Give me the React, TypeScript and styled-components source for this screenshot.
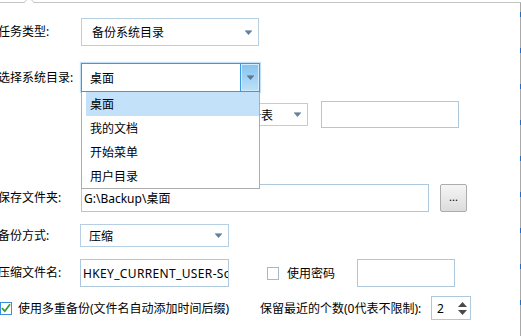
import React from "react";
import styled, { createGlobalStyle } from "styled-components";

const GlobalStyle = createGlobalStyle`
  html, body { margin: 0; padding: 0; background: #fff; overflow: hidden; }
  body {
    font-family: "Noto Sans", "Noto Sans CJK SC", sans-serif;
    font-size: 12px;
    color: #000;
  }
  * { box-sizing: border-box; }
`;

const Screen = styled.div`
  width: 521px;
  height: 336px;
  position: relative;
  overflow: hidden;
  background: #fff;
`;

const Panel = styled.div`
  margin-top: 2px;
  height: 334px;
  border-top: 1px solid #c6c6c6;
  border-right: 1px solid #a9a9a9;
  position: relative;
  display: flex;
  flex-direction: column;
  &::after {
    content: "";
    position: absolute;
    right: -1px;
    top: 0;
    bottom: 0;
    width: 1px;
    background: repeating-linear-gradient(
      to bottom,
      transparent 0px,
      transparent 9px,
      #1c6fc4 9px,
      #1c6fc4 14px,
      transparent 14px,
      transparent 36px
    );
  }
`;

const Notch = styled.svg`
  position: absolute;
  left: 23px;
  top: -3px;
`;

const Row = styled.div<{ $h: number; $mt: number }>`
  display: flex;
  align-items: center;
  height: ${(p) => p.$h}px;
  margin-top: ${(p) => p.$mt}px;
  position: relative;
  flex-shrink: 0;
`;

const Label = styled.div<{ $w?: number }>`
  width: ${(p) => p.$w ?? 83}px;
  margin-left: -2px;
  flex-shrink: 0;
  white-space: nowrap;
  line-height: 16px;
`;

const SelectBox = styled.div<{ $w: number; $h: number; $focused?: boolean; $ml?: number }>`
  width: ${(p) => p.$w}px;
  height: ${(p) => p.$h}px;
  margin-left: ${(p) => p.$ml ?? 0}px;
  border: 1px solid ${(p) => (p.$focused ? "#3c9ae4" : "#b7cfe3")};
  box-shadow: ${(p) => (p.$focused ? "0 0 1px 1px rgba(90,170,235,0.35)" : "none")};
  background: #fff;
  display: flex;
  align-items: stretch;
  position: relative;
  flex-shrink: 0;
`;

const SelectText = styled.div<{ $pad: number }>`
  flex: 1;
  padding-left: ${(p) => p.$pad}px;
  display: flex;
  align-items: center;
  white-space: nowrap;
  overflow: hidden;
`;

const ArrowCell = styled.div<{ $focused?: boolean }>`
  width: 19px;
  display: flex;
  align-items: center;
  justify-content: center;
  background: ${(p) => (p.$focused ? "linear-gradient(#86c3ef, #bde1f9)" : "transparent")};
  border-left: ${(p) => (p.$focused ? "1px solid #3c9ae4" : "none")};
  box-shadow: ${(p) => (p.$focused ? "inset 0 0 0 1px #d3ebfb" : "none")};
`;

const DropList = styled.div`
  position: absolute;
  top: calc(100% + 1px);
  left: -1px;
  width: calc(100% + 2px);
  border: 1px solid #adadad;
  border-top: none;
  background: #fff;
  padding-left: 4px;
  z-index: 5;
`;

const DropItem = styled.div<{ $selected?: boolean }>`
  height: 24px;
  display: flex;
  align-items: center;
  padding-left: 4px;
  background: ${(p) => (p.$selected ? "#c4e1fa" : "transparent")};
  white-space: nowrap;
`;

const TextBox = styled.div<{ $w: number; $h: number; $ml?: number; $ls?: number }>`
  width: ${(p) => p.$w}px;
  height: ${(p) => p.$h}px;
  margin-left: ${(p) => p.$ml ?? 0}px;
  border: 1px solid #aec8de;
  background: #fff;
  padding-left: 2px;
  display: flex;
  align-items: center;
  white-space: nowrap;
  overflow: hidden;
  flex-shrink: 0;
  letter-spacing: ${(p) => p.$ls ?? 0}px;
`;

const BrowseButton = styled.div`
  width: 27px;
  height: 28px;
  margin-left: 11px;
  border: 1px solid #acacac;
  border-radius: 2px;
  background: linear-gradient(#f5f5f5, #dcdcdc);
  display: flex;
  align-items: center;
  justify-content: center;
  font-size: 11px;
  line-height: 1;
  padding-bottom: 3px;
  flex-shrink: 0;
`;

const Check = styled.div<{ $checked?: boolean; $ml?: number }>`
  width: 12px;
  height: 13px;
  margin-left: ${(p) => p.$ml ?? 0}px;
  border: 1px solid ${(p) => (p.$checked ? "#3b8fdc" : "#a6b9cb")};
  background: #fff;
  display: flex;
  align-items: center;
  justify-content: center;
  flex-shrink: 0;
`;

const CheckLabel = styled.span<{ $ml: number }>`
  margin-left: ${(p) => p.$ml}px;
  white-space: nowrap;
`;

const Cell = styled.div<{ $w: number }>`
  width: ${(p) => p.$w}px;
  display: flex;
  align-items: center;
  flex-shrink: 0;
`;

const Spinner = styled.div`
  width: 40px;
  height: 24px;
  margin-left: 6px;
  border: 1px solid #aec8de;
  background: #fff;
  display: flex;
  align-items: center;
  flex-shrink: 0;
`;

const SpinValue = styled.div`
  flex: 1;
  padding-left: 5px;
`;

const SpinArrows = styled.div`
  width: 14px;
  display: flex;
  flex-direction: column;
  align-items: center;
  gap: 3px;
  padding-right: 2px;
`;

const Arrow = ({ color = "#62819d" }: { color?: string }) => (
  <svg width="7" height="5" viewBox="0 0 7 5">
    <rect x="0" y="0" width="7" height="1" fill={color} opacity="0.6" />
    <polygon points="0,1 7,1 3.5,5" fill={color} />
  </svg>
);

const Tri = ({ up }: { up?: boolean }) => (
  <svg width="9" height="5" viewBox="0 0 9 5">
    <polygon points={up ? "0,5 9,5 4.5,0" : "0,0 9,0 4.5,5"} fill="#4a4a4a" />
  </svg>
);

const CheckMark = () => (
  <svg width="10" height="10" viewBox="0 0 10 10">
    <path d="M1 5.2 L3.8 8.2 L9 1.2" stroke="#3a9b2f" strokeWidth="1.8" fill="none" />
  </svg>
);

export default function App() {
  return (
    <>
      <GlobalStyle />
      <Screen>
        <Panel>
          <Notch width="12" height="4" viewBox="0 0 12 4">
            <rect x="1.5" y="2" width="9" height="2" fill="#fff" />
            <path d="M0.5 3 L3.5 0" stroke="#c6c6c6" strokeWidth="1" />
            <path d="M8.5 0 L11.5 3" stroke="#c6c6c6" strokeWidth="1" />
          </Notch>

          <Row $h={28} $mt={15}>
            <Label>任务类型:</Label>
            <SelectBox $w={178} $h={28}>
              <SelectText $pad={10}>备份系统目录</SelectText>
              <ArrowCell>
                <Arrow />
              </ArrowCell>
            </SelectBox>
          </Row>

          <Row $h={29} $mt={17} style={{ zIndex: 5 }}>
            <Label>选择系统目录:</Label>
            <SelectBox $w={179} $h={29} $focused>
              <SelectText $pad={8}>桌面</SelectText>
              <ArrowCell $focused>
                <Arrow color="#5c7893" />
              </ArrowCell>
              <DropList>
                <DropItem $selected>桌面</DropItem>
                <DropItem>我的文档</DropItem>
                <DropItem>开始菜单</DropItem>
                <DropItem>用户目录</DropItem>
              </DropList>
            </SelectBox>
          </Row>

          <Row $h={27} $mt={9}>
            <SelectBox $w={80} $h={23} $ml={228}>
              <SelectText $pad={8}>注册表</SelectText>
              <ArrowCell>
                <Arrow />
              </ArrowCell>
            </SelectBox>
            <TextBox $w={138} $h={27} $ml={13} />
          </Row>

          <Row $h={29} $mt={55}>
            <Label>保存文件夹:</Label>
            <TextBox $w={348} $h={28}>G:\Backup\桌面</TextBox>
            <BrowseButton>...</BrowseButton>
          </Row>

          <Row $h={23} $mt={12}>
            <Label $w={82}>备份方式:</Label>
            <SelectBox $w={149} $h={23}>
              <SelectText $pad={8}>压缩</SelectText>
              <ArrowCell>
                <Arrow />
              </ArrowCell>
            </SelectBox>
          </Row>

          <Row $h={28} $mt={12}>
            <Label $w={82}>压缩文件名:</Label>
            <TextBox $w={149} $h={28} $ls={0.35}>HKEY_CURRENT_USER-Software</TextBox>
            <Check $ml={38} />
            <CheckLabel $ml={8}>使用密码</CheckLabel>
            <TextBox $w={98} $h={28} $ml={22} />
          </Row>

          <Row $h={24} $mt={9}>
            <Cell $w={260}>
              <Check $checked>
                <CheckMark />
              </Check>
              <CheckLabel $ml={6}>使用多重备份(文件名自动添加时间后缀)</CheckLabel>
            </Cell>
            <Cell $w={165}>保留最近的个数(0代表不限制):</Cell>
            <Spinner>
              <SpinValue>2</SpinValue>
              <SpinArrows>
                <Tri up />
                <Tri />
              </SpinArrows>
            </Spinner>
          </Row>
        </Panel>
      </Screen>
    </>
  );
}
